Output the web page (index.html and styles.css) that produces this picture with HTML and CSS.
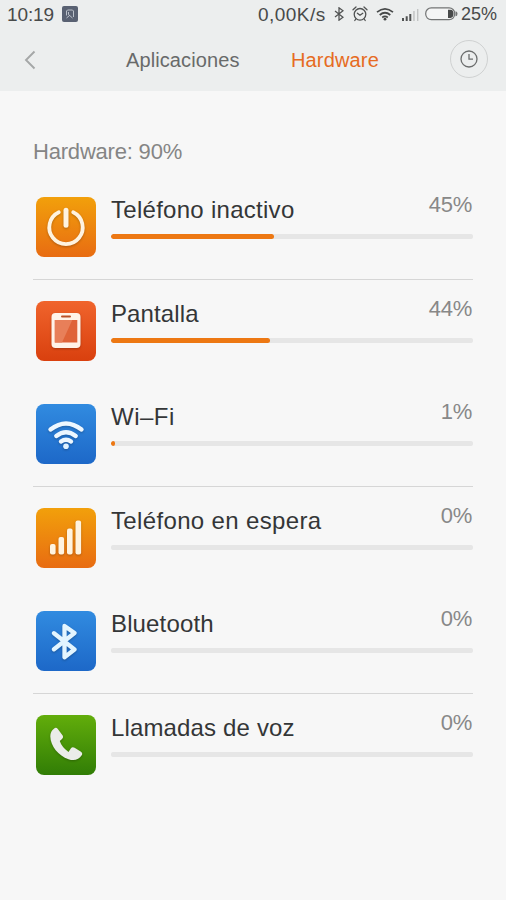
FILE: index.html
```html
<!DOCTYPE html>
<html lang="es">
<head>
<meta charset="utf-8">
<meta name="viewport" content="width=device-width, initial-scale=1">
<title>Hardware</title>
<link rel="stylesheet" href="styles.css">
</head>
<body>
<header class="header">
  <div class="status">
    <span class="time">10:19</span>
    <svg class="app-badge" width="16" height="16" viewBox="0 0 16 16"><rect width="16" height="16" rx="2" fill="#596172"/><path d="M4.5 9.5V5l1-1h5l1 1v6M6.5 6v2.5l4 3.5M4.5 12l3-2.5" fill="none" stroke="#c5cbd3" stroke-width=".9"/></svg>
    <span class="speed">0,00K/s</span>
    <svg class="st-bt" width="10" height="14" viewBox="0 0 10 14"><path d="M1 4l8 6.2L5 13.2V.8l4 3L1 10" fill="none" stroke="#505252" stroke-width="1.25"/></svg>
    <svg class="st-alarm" width="16" height="16" viewBox="0 0 16 16" fill="none" stroke="#505252" stroke-width="1.3" stroke-linecap="round"><circle cx="8" cy="8.3" r="5.8"/><path d="M1 3.7L4 1M15 3.7L12 1M5.4 7.2L8 9.3l2.8-2M3.8 13l-1 1.5M12.2 13l1 1.5"/></svg>
    <svg class="st-wifi" width="18" height="14" viewBox="0 0 18 14"><g fill="none" stroke="#484a4a" stroke-width="1.7"><path d="M1 5.2Q9-1.5 17 5.2M3.7 8Q9 3.5 14.3 8M6.2 10.5Q9 8.3 11.8 10.5"/></g><circle cx="9" cy="12.2" r="1.4" fill="#484a4a"/></svg>
    <svg class="st-signal" width="18" height="13" viewBox="0 0 18 13"><path d="M1 10h2v3H1zM4.7 8.3h2V13h-2zM8.3 6h2v7h-2z" fill="#505252"/><path d="M12.2 3h1.5v10h-1.5zM16 1h1.4v12H16z" fill="#c2c4c4"/></svg>
    <svg class="st-battery" width="33" height="14" viewBox="0 0 33 14"><rect x=".7" y=".9" width="29" height="11.8" rx="5.6" fill="#f4f5f5" stroke="#727474" stroke-width="1.2"/><path d="M23 2.7h2.5q3 0 3 4.1t-3 4.1H23z" fill="#484a4a"/><path d="M30.5 4.2q2 0 2 2.5t-2 2.5z" fill="#727474"/></svg>
    <span class="charge">25%</span>
  </div>
  <nav class="tabs">
    <svg class="back" width="12" height="20" viewBox="0 0 12 20"><path d="M10.5 1.5L2 10l8.5 8.5" fill="none" stroke="#a5a7a7" stroke-width="1.9"/></svg>
    <span class="tab tab-apps">Aplicaciones</span>
    <span class="tab tab-hardware">Hardware</span>
    <span class="history"><svg width="18" height="18" viewBox="0 0 18 18" fill="none" stroke="#6b6d6d" stroke-width="1.3"><circle cx="9" cy="9" r="8"/><path d="M9 4v5.2h4"/></svg></span>
  </nav>
</header>
<main class="content">
  <h1 class="summary">Hardware: 90%</h1>
  <ul class="list">
    <li class="row divided">
      <span class="icon orange"><svg width="60" height="60" viewBox="0 0 60 60" fill="none" stroke="#fff3df" stroke-linecap="round"><path d="M22.8 15.3a16.7 16.7 0 1 0 14.4 0" stroke-width="3.8"/><path d="M30 13.3v15" stroke-width="5"/></svg></span>
      <div class="info"><span class="name n-idle">Teléfono inactivo</span><span class="percent">45%</span><div class="track"><div class="fill" style="width:45%"></div></div></div>
    </li>
    <li class="row">
      <span class="icon red"><svg width="60" height="60" viewBox="0 0 60 60"><rect x="15.5" y="12" width="29" height="35" rx="4" fill="#fff3e9"/><rect x="25" y="14.5" width="10" height="2" rx="1" fill="#b95028"/><path d="M18.8 19h22.5v22.5H18.8z" fill="#df6338"/><path d="M18.8 19h17.5L26 41.5h-7.2z" fill="#e87f59"/></svg></span>
      <div class="info"><span class="name n-screen">Pantalla</span><span class="percent">44%</span><div class="track"><div class="fill" style="width:44%"></div></div></div>
    </li>
    <li class="row divided">
      <span class="icon blue"><svg width="60" height="60" viewBox="0 0 60 60"><path d="M14.5 25.5Q30 13.3 45.5 25.5M20.3 32Q30 24.5 39.7 32M25 37.5Q30 33.8 35 37.5" fill="none" stroke="#edf7ff" stroke-width="4.4" stroke-linecap="round"/><circle cx="30" cy="42.3" r="2.8" fill="#e0f2ff"/></svg></span>
      <div class="info"><span class="name n-wifi">Wi–Fi</span><span class="percent">1%</span><div class="track"><div class="fill" style="width:1%"></div></div></div>
    </li>
    <li class="row">
      <span class="icon orange"><svg width="60" height="60" viewBox="0 0 60 60" fill="#fff3df"><rect x="14" y="36" width="5.6" height="10.5" rx="2"/><rect x="22.5" y="29" width="5.6" height="17.5" rx="2"/><rect x="31" y="20.5" width="5.6" height="26" rx="2"/><rect x="39.5" y="12.5" width="5.6" height="34" rx="2"/></svg></span>
      <div class="info"><span class="name n-standby">Teléfono en espera</span><span class="percent">0%</span><div class="track"></div></div>
    </li>
    <li class="row divided">
      <span class="icon blue"><svg width="60" height="60" viewBox="0 0 60 60"><path d="M18 22.2L38.5 38.5L28.5 46.2V15L38.5 22L18 38.3" fill="none" stroke="#e3f5ff" stroke-width="4.3" stroke-linecap="round" stroke-linejoin="round"/></svg></span>
      <div class="info"><span class="name n-bt">Bluetooth</span><span class="percent">0%</span><div class="track"></div></div>
    </li>
    <li class="row">
      <span class="icon green"><svg width="60" height="60" viewBox="0 0 60 60"><path d="M18.2 13.4Q20.2 12 22 14.2L26.5 20.2Q27.8 22.3 26 24L23.8 26Q25.5 31.8 32.5 37L34.8 33.4Q36.3 31.5 38.6 32.7L45 36.8Q47 38.2 45.7 40.3C43 44.8 38 46.2 32.5 44.2C22.5 40.8 14.5 31 14.3 21.2Q14.4 16 18.2 13.4Z" fill="#ebece9"/></svg></span>
      <div class="info"><span class="name n-calls">Llamadas de voz</span><span class="percent">0%</span><div class="track"></div></div>
    </li>
  </ul>
</main>
</body>
</html>
```
FILE: styles.css
```css
* { box-sizing: border-box; }
body {
  margin: 0;
  min-height: 900px;
  background: #f7f7f7;
  font-family: "Liberation Sans", Arial, sans-serif;
  color: #343637;
}
svg { display: block; flex: none; }
span { white-space: nowrap; }
.header { height: 91px; background: #eceeee; }
.status {
  display: flex;
  align-items: center;
  height: 29px;
  padding-left: 7px;
  color: #484a4a;
  line-height: 29px;
}
.time { width: 55px; font-size: 19px; letter-spacing: -.1px; }
.app-badge { margin-top: -2px; }
.speed { width: 68px; margin-left: 180px; font-size: 19px; letter-spacing: .45px; }
.st-bt { margin-left: 8px; margin-top: -1px; }
.st-alarm { margin-left: 8px; margin-top: -1px; }
.st-wifi { margin-left: 8px; margin-top: -1px; }
.st-signal { margin-left: 7px; }
.st-battery { margin-left: 6px; margin-top: -1px; }
.charge { margin-left: 3px; font-size: 18px; }
.tabs { display: flex; align-items: center; height: 62px; }
.back { margin-left: 24px; }
.tab { font-size: 20px; line-height: 26px; margin-top: -1px; color: #686a6a; }
.tab-apps { width: 165px; margin-left: 90px; letter-spacing: .1px; }
.tab-hardware { width: 158px; color: #e66b22; letter-spacing: .15px; }
.history {
  display: grid;
  place-items: center;
  width: 38px;
  height: 38px;
  margin-left: 1px;
  margin-top: -2px;
  border: 1px solid #cfd1d1;
  border-radius: 50%;
}
.content { padding: 45px 33px 0; }
.summary {
  margin: 0;
  height: 40px;
  color: #858585;
  font-size: 22px;
  font-weight: 400;
  line-height: 32px;
  letter-spacing: -.2px;
}
.list { margin: 0; padding: 0; list-style: none; }
.row {
  display: flex;
  height: 103.6px;
  padding: 21px 0 0 3.4px;
}
.row.divided { border-bottom: 1px solid #d6d6d6; }
.icon {
  flex: none;
  width: 60px;
  height: 60px;
  border-radius: 8px;
}
.icon svg { filter: drop-shadow(0 1px 1px rgb(0 0 0 / 25%)); }
.orange { background: linear-gradient(#f2a00b, #e86c12); }
.red { background: linear-gradient(#f0642c, #d9400e); }
.blue { background: linear-gradient(#318be0, #1d68c8); }
.green { background: linear-gradient(#62ad0b, #317d06); }
.info {
  display: grid;
  grid-template-columns: 1fr auto;
  grid-template-rows: 37px 5px;
  flex: 1;
  margin-left: 14.6px;
}
.name { margin-top: -1px; font-size: 24px; line-height: 27px; }
.n-idle { letter-spacing: .28px; }
.n-screen { letter-spacing: .12px; }
.n-wifi { letter-spacing: .5px; }
.n-standby { letter-spacing: .35px; }
.n-bt { letter-spacing: .15px; }
.n-calls { letter-spacing: .15px; }
.percent {
  margin-top: -6px;
  padding-right: 1px;
  color: #888;
  font-size: 22px;
  line-height: 27px;
  letter-spacing: -.3px;
}
.track {
  grid-column: 1 / -1;
  height: 5px;
  border-radius: 2px;
  background: #e6e6e6;
  overflow: hidden;
}
.fill { height: 100%; border-radius: 2.5px; background: #ed7813; }
```
